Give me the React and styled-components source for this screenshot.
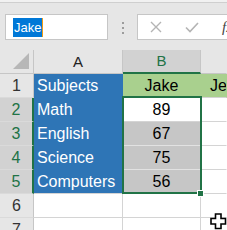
import React from "react";
import styled, { createGlobalStyle } from "styled-components";

const GlobalStyle = createGlobalStyle`
  html, body {
    margin: 0;
    padding: 0;
    overflow: hidden;
    background: #ffffff;
    font-family: "Liberation Sans", Arial, sans-serif;
  }
`;

const GREEN = "#217346";
const BLUE = "#2e75b6";
const LIGHT_GREEN = "#a9d08e";
const GRID = "#d4d4d4";
const HEAD_BG = "#e6e6e6";
const HEAD_SEL = "#d2d2d2";
const SEL_FILL = "#c6c6c6";

const rows = [
  { label: "Subjects", value: "Jake", next: "Jeremy" },
  { label: "Math", value: "89" },
  { label: "English", value: "67" },
  { label: "Science", value: "75" },
  { label: "Computers", value: "56" },
  { label: "", value: "" },
  { label: "", value: "" },
];

const App = () => {
  return (
    <>
      <GlobalStyle />
      <Page>
        <RibbonEdge />
        <FormulaBar>
          <NameBox>
            <Selected>Jake</Selected>
            <Caret />
          </NameBox>
          <Grip>
            <Dot />
            <Dot />
            <Dot />
          </Grip>
          <FormulaBox>
            <BarIcon width="12" height="12" viewBox="0 0 12 12" $gap={12}>
              <path d="M1 1 L11 11 M11 1 L1 11" stroke="#b4b4b4" strokeWidth="1.4" fill="none" />
            </BarIcon>
            <BarIcon width="14" height="11" viewBox="0 0 14 11" $gap={23}>
              <path d="M1 5.5 L5 9.5 L13 1" stroke="#b4b4b4" strokeWidth="1.6" fill="none" />
            </BarIcon>
            <FxLabel>fx</FxLabel>
          </FormulaBox>
        </FormulaBar>

        <Sheet>
          <Grid>
            <Corner>
              <svg width="17" height="17" viewBox="0 0 17 17">
                <polygon points="16,0 16,16 0,16" fill="#b7b7b7" />
              </svg>
            </Corner>
            <ColHeader>A</ColHeader>
            <ColHeader $active>B</ColHeader>
            <ColHeader $last />

            {rows.map((row, i) => {
              const r = i + 1;
              const inSel = r >= 2 && r <= 5;
              const filled = r <= 5;
              return (
                <React.Fragment key={r}>
                  <RowHeader $active={inSel}>{r}</RowHeader>
                  <Cell
                    $bg={filled ? BLUE : "#fff"}
                    $fg="#fff"
                    $vline={filled ? BLUE : GRID}
                    $hline={filled && r < 5 ? BLUE : GRID}
                  >
                    {row.label}
                  </Cell>
                  <Cell
                    $align="center"
                    $bg={r === 1 ? LIGHT_GREEN : r >= 3 && r <= 5 ? SEL_FILL : "#fff"}
                    $vline={r === 1 ? LIGHT_GREEN : GRID}
                    $hline={r >= 3 && r <= 4 ? "#e2e2e2" : GRID}
                  >
                    {row.value}
                  </Cell>
                  <Cell $bg={r === 1 ? LIGHT_GREEN : "#fff"} $pad={9} $vline="transparent">
                    {row.next || ""}
                  </Cell>
                </React.Fragment>
              );
            })}
          </Grid>

          <Selection />
          <FillHandle />
          <Pointer width="17" height="17" viewBox="0 0 17 17">
            <path
              d="M5.5 1 H11 V5.5 H15.5 V11 H11 V15.5 H5.5 V11 H1 V5.5 H5.5 Z"
              fill="#fff"
              stroke="#000"
              strokeWidth="1.6"
              strokeLinejoin="miter"
            />
          </Pointer>
        </Sheet>
      </Page>
    </>
  );
};

export default App;

const Page = styled.div`
  width: 227px;
  height: 230px;
  overflow: hidden;
  background: #fff;
`;

const RibbonEdge = styled.div`
  height: 2px;
  background: #f1f1f1;
`;

const FormulaBar = styled.div`
  box-sizing: border-box;
  height: 48px;
  display: flex;
  align-items: flex-start;
  padding: 11px 0 0 5px;
  background: ${HEAD_BG};
  border-top: 1px solid #cfcfcf;
`;

const NameBox = styled.div`
  box-sizing: border-box;
  width: 103px;
  height: 26px;
  display: flex;
  align-items: center;
  padding-left: 7px;
  background: #fff;
  border: 1px solid #c6c6c6;
`;

const Selected = styled.span`
  display: inline-block;
  height: 19px;
  padding: 0 1px 0 1px;
  background: #0078d7;
  color: #fff;
  font-size: 13px;
  line-height: 19px;
`;

const Caret = styled.span`
  width: 1px;
  height: 19px;
  background: #f39c12;
`;

const Grip = styled.div`
  width: 29px;
  display: flex;
  flex-direction: column;
  align-items: center;
  gap: 3px;
  padding-top: 8px;
`;

const Dot = styled.span`
  width: 2px;
  height: 2px;
  background: #9c9c9c;
`;

const FormulaBox = styled.div`
  box-sizing: border-box;
  flex: 1;
  height: 26px;
  display: flex;
  align-items: center;
  background: #fff;
  border: 1px solid #c6c6c6;
  border-right: none;
  overflow: hidden;
  white-space: nowrap;
`;

const BarIcon = styled.svg`
  flex: none;
  margin-left: ${(p) => p.$gap}px;
`;

const FxLabel = styled.span`
  margin-left: 23px;
  font-family: "Liberation Serif", "Times New Roman", serif;
  font-style: italic;
  font-size: 15px;
  color: #444;
`;

const Sheet = styled.div`
  position: relative;
`;

const Grid = styled.div`
  display: grid;
  grid-template-columns: 34px 89px 78px 1fr;
  grid-auto-rows: 24px;
  width: 227px;
`;

const Corner = styled.div`
  box-sizing: border-box;
  display: flex;
  align-items: flex-end;
  justify-content: flex-end;
  padding: 0 3px 3px 0;
  background: ${HEAD_BG};
  border-right: 1px solid #c6c6c6;
  border-bottom: 1px solid #c6c6c6;
`;

const ColHeader = styled.div`
  box-sizing: border-box;
  background: ${(p) => (p.$active ? HEAD_SEL : HEAD_BG)};
  color: ${(p) => (p.$active ? GREEN : "#222")};
  border-right: 1px solid ${(p) => (p.$last ? "transparent" : "#c6c6c6")};
  border-bottom: ${(p) => (p.$active ? `2px solid ${GREEN}` : "1px solid #c6c6c6")};
  text-align: center;
  font-size: 15px;
  line-height: ${(p) => (p.$active ? 22 : 23)}px;
`;

const RowHeader = styled.div`
  box-sizing: border-box;
  background: ${(p) => (p.$active ? HEAD_SEL : HEAD_BG)};
  color: ${(p) => (p.$active ? GREEN : "#333")};
  border-right: ${(p) => (p.$active ? `2px solid ${GREEN}` : "1px solid #c6c6c6")};
  border-bottom: 1px solid #dadada;
  text-align: center;
  font-size: 16px;
  line-height: 24px;
`;

const Cell = styled.div`
  box-sizing: border-box;
  padding: 0 3px 0 ${(p) => (p.$pad != null ? p.$pad : 3)}px;
  background: ${(p) => p.$bg};
  color: ${(p) => p.$fg || "#000"};
  border-right: 1px solid ${(p) => p.$vline || GRID};
  border-bottom: 1px solid ${(p) => p.$hline || GRID};
  text-align: ${(p) => p.$align || "left"};
  font-size: 16px;
  line-height: 23px;
  white-space: nowrap;
  overflow: hidden;
`;

const Selection = styled.div`
  position: absolute;
  left: 122px;
  top: 46px;
  width: 80px;
  height: 98px;
  box-sizing: border-box;
  border: 2px solid ${GREEN};
  pointer-events: none;
`;

const FillHandle = styled.div`
  position: absolute;
  left: 198px;
  top: 141px;
  width: 5px;
  height: 5px;
  background: ${GREEN};
  box-shadow: 0 0 0 1px #fff;
`;

const Pointer = styled.svg`
  position: absolute;
  left: 210px;
  top: 163px;
`;
